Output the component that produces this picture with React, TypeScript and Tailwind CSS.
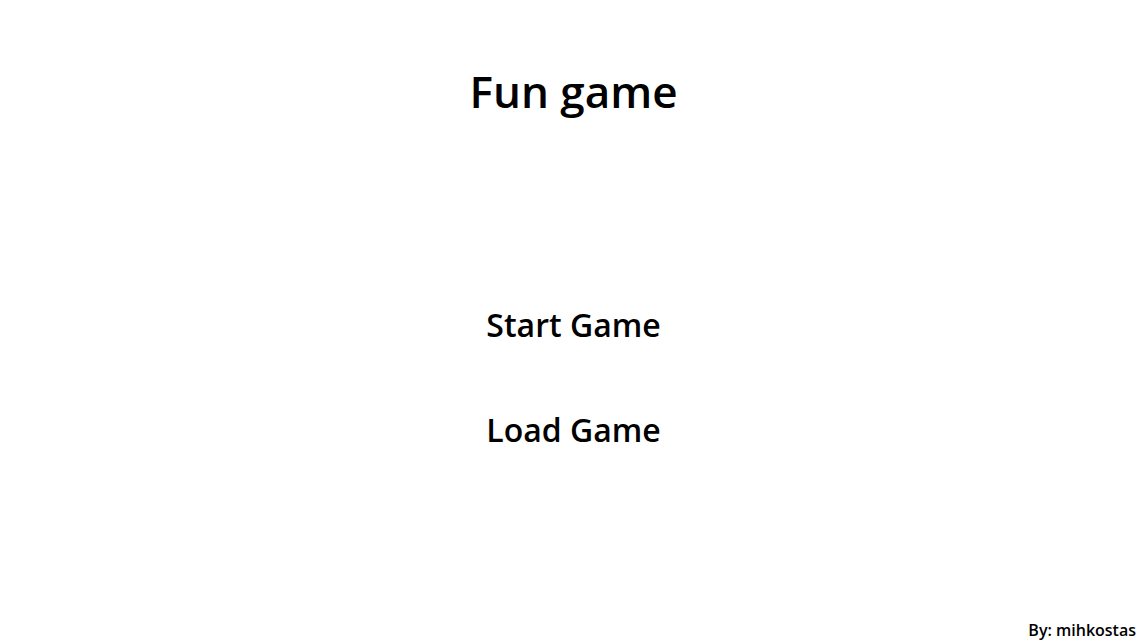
import React from 'react';

export default function App() {
  return (
    <div className="h-[642px] w-full bg-white text-black flex flex-col font-['Open_Sans',sans-serif] font-semibold">
      <h1 className="text-[44px] leading-[54px] text-center mt-[64px]">Fun game</h1>
      <div className="flex flex-col items-center mt-[187px] gap-[65px]">
        <button className="text-[32px] leading-[40px]">Start Game</button>
        <button className="text-[32px] leading-[40px]">Load Game</button>
      </div>
      <div className="mt-auto self-end pr-[11px] pb-[1px] text-[16px] leading-[22px]">By: mihkostas</div>
    </div>
  );
}
